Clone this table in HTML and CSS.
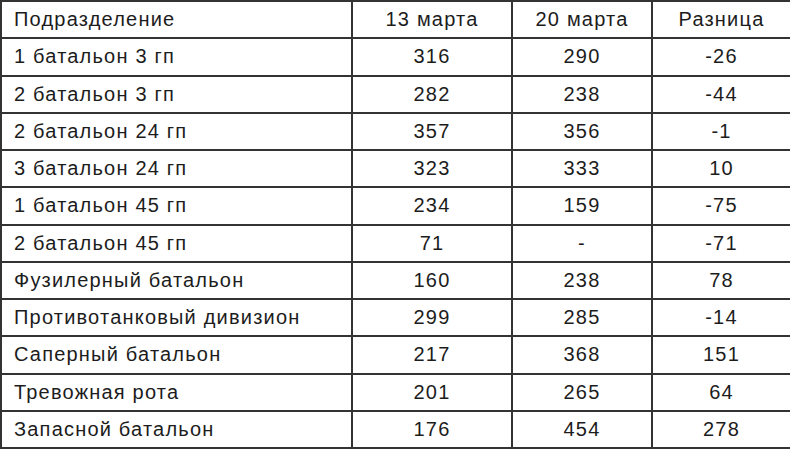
FILE: index.html
```html
<!DOCTYPE html>
<html lang="ru">
<head>
<meta charset="utf-8">
<link rel="stylesheet" href="styles.css">
</head>
<body>
<table class="data">
<colgroup><col class="c1"><col class="c2"><col class="c3"><col class="c4"></colgroup>
<tr><td class="name">Подразделение</td><td>13 марта</td><td>20 марта</td><td>Разница</td></tr>
<tr><td class="name">1 батальон 3 гп</td><td>316</td><td>290</td><td>-26</td></tr>
<tr><td class="name">2 батальон 3 гп</td><td>282</td><td>238</td><td>-44</td></tr>
<tr><td class="name">2 батальон 24 гп</td><td>357</td><td>356</td><td>-1</td></tr>
<tr><td class="name">3 батальон 24 гп</td><td>323</td><td>333</td><td>10</td></tr>
<tr><td class="name">1 батальон 45 гп</td><td>234</td><td>159</td><td>-75</td></tr>
<tr><td class="name">2 батальон 45 гп</td><td>71</td><td>-</td><td>-71</td></tr>
<tr><td class="name">Фузилерный батальон</td><td>160</td><td>238</td><td>78</td></tr>
<tr><td class="name">Противотанковый дивизион</td><td>299</td><td>285</td><td>-14</td></tr>
<tr><td class="name">Саперный батальон</td><td>217</td><td>368</td><td>151</td></tr>
<tr><td class="name">Тревожная рота</td><td>201</td><td>265</td><td>64</td></tr>
<tr><td class="name">Запасной батальон</td><td>176</td><td>454</td><td>278</td></tr>
</table>
</body>
</html>
```
FILE: styles.css
```css
html, body {
  margin: 0;
  padding: 0;
  background: #fff;
}
.data {
  width: 790px;
  height: 449px;
  border-collapse: collapse;
  table-layout: fixed;
  font-family: "Liberation Sans", Arial, sans-serif;
  font-size: 20px;
  letter-spacing: 1.2px;
  color: #1c1c1c;
}
.c1 { width: 351px; }
.c2 { width: 160px; }
.c3 { width: 140px; }
.c4 { width: 139px; }
.data td {
  border: 2px solid #333;
  text-align: center;
  vertical-align: middle;
  padding: 0;
  white-space: nowrap;
}
.data td.name {
  text-align: left;
  padding-left: 12px;
}
```
